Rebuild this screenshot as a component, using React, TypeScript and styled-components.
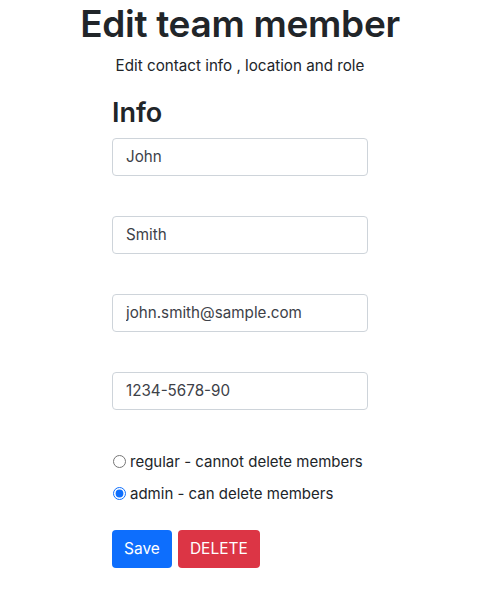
import React from "react";
import styled, { createGlobalStyle } from "styled-components";

const Global = createGlobalStyle`
  body {
    margin: 0;
    background: #fff;
    font-family: Inter, "Noto Sans", "Liberation Sans", sans-serif;
    color: #212529;
  }
  * { box-sizing: border-box; }
`;

const Page = styled.div`
  display: flex;
  flex-direction: column;
  align-items: center;
  padding-left: 2px;
`;

const Title = styled.h1`
  margin: 2px 0 0;
  font-size: 37px;
  font-weight: 600;
  line-height: 1.2;
  letter-spacing: -0.3px;
`;

const Subtitle = styled.p`
  margin: 8px 0 0;
  font-size: 15.2px;
  line-height: 24px;
`;

const Form = styled.form`
  width: 256px;
  display: flex;
  flex-direction: column;
  margin-top: 19px;
`;

const Heading = styled.h3`
  margin: 0 0 8px;
  font-size: 27px;
  font-weight: 600;
  line-height: 1.2;
`;

const Field = styled.input`
  display: block;
  width: 100%;
  height: 38px;
  padding: 6px 13px;
  font: inherit;
  font-size: 15.2px;
  color: #3d4148;
  border: 1px solid #ced4da;
  border-radius: 4px;
  background: #fff;
  margin-bottom: 40px;
  outline: none;
`;

const RadioRow = styled.label`
  display: flex;
  align-items: center;
  gap: 4px;
  font-size: 15px;
  line-height: 24px;
  margin-bottom: 8px;
  color: #212529;
`;

const Radio = styled.input`
  margin: 0 0 0 1px;
  width: 13px;
  height: 13px;
  accent-color: #0d6efd;
`;

const Buttons = styled.div`
  display: flex;
  gap: 6px;
  margin-top: 16px;
`;

const Button = styled.button<{ $tone: "primary" | "danger" }>`
  height: 38px;
  padding: 0 12px;
  border: none;
  border-radius: 4px;
  font: inherit;
  font-size: 15.5px;
  color: #fff;
  background: ${(p) => (p.$tone === "primary" ? "#0d6efd" : "#dc3545")};
`;

export default function App() {
  return (
    <Page>
      <Global />
      <Title>Edit team member</Title>
      <Subtitle>Edit contact info , location and role</Subtitle>
      <Form onSubmit={(e) => e.preventDefault()}>
        <Heading>Info</Heading>
        <Field defaultValue="John" />
        <Field defaultValue="Smith" />
        <Field defaultValue="john.smith@sample.com" />
        <Field defaultValue="1234-5678-90" />
        <RadioRow>
          <Radio type="radio" name="role" />
          regular - cannot delete members
        </RadioRow>
        <RadioRow>
          <Radio type="radio" name="role" defaultChecked />
          admin - can delete members
        </RadioRow>
        <Buttons>
          <Button $tone="primary" type="button">Save</Button>
          <Button $tone="danger" type="button">DELETE</Button>
        </Buttons>
      </Form>
    </Page>
  );
}
